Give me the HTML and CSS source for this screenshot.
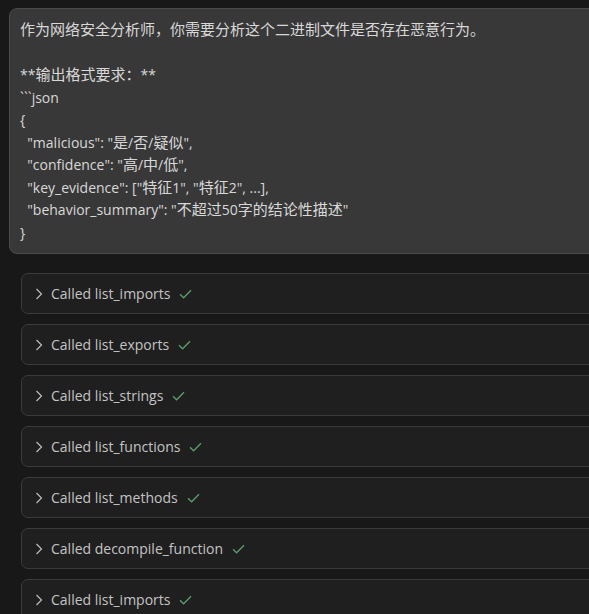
FILE: index.html
```html
<!DOCTYPE html>
<html>
<head>
<meta charset="utf-8">
<link rel="stylesheet" href="styles.css">
</head>
<body>
<div class="page">
  <div class="msg">
    <div class="line"><span class="cjk">作为网络安全分析师，你需要分析这个二进制文件是否存在恶意行为。</span></div>
    <div class="line">&nbsp;</div>
    <div class="line">**<span class="cjk">输出格式要求：</span>**</div>
    <div class="line">&#96;&#96;&#96;json</div>
    <div class="line">{</div>
    <div class="line">&nbsp;&nbsp;"malicious": "<span class="cjk">是</span>/<span class="cjk">否</span>/<span class="cjk">疑似</span>",</div>
    <div class="line">&nbsp;&nbsp;"confidence": "<span class="cjk">高</span>/<span class="cjk">中</span>/<span class="cjk">低</span>",</div>
    <div class="line">&nbsp;&nbsp;"key_evidence": ["<span class="cjk">特征</span>1", "<span class="cjk">特征</span>2", ...],</div>
    <div class="line">&nbsp;&nbsp;"behavior_summary": "<span class="cjk">不超过</span>50<span class="cjk">字的结论性描述</span>"</div>
    <div class="line">}</div>
  </div>
  <div class="calls">
    <div class="call"><svg class="chev" width="8" height="12" viewBox="0 0 8 12"><path d="M1.5 1 L6.5 6 L1.5 11" fill="none" stroke="#bdbdbd" stroke-width="1.2"/></svg><span class="label">Called list_imports</span><svg class="check" width="13" height="10" viewBox="0 0 13 10"><path d="M1 5.2 L4.6 8.8 L12 1.2" fill="none" stroke="#5a9d6c" stroke-width="1.3"/></svg></div>
    <div class="call"><svg class="chev" width="8" height="12" viewBox="0 0 8 12"><path d="M1.5 1 L6.5 6 L1.5 11" fill="none" stroke="#bdbdbd" stroke-width="1.2"/></svg><span class="label">Called list_exports</span><svg class="check" width="13" height="10" viewBox="0 0 13 10"><path d="M1 5.2 L4.6 8.8 L12 1.2" fill="none" stroke="#5a9d6c" stroke-width="1.3"/></svg></div>
    <div class="call"><svg class="chev" width="8" height="12" viewBox="0 0 8 12"><path d="M1.5 1 L6.5 6 L1.5 11" fill="none" stroke="#bdbdbd" stroke-width="1.2"/></svg><span class="label">Called list_strings</span><svg class="check" width="13" height="10" viewBox="0 0 13 10"><path d="M1 5.2 L4.6 8.8 L12 1.2" fill="none" stroke="#5a9d6c" stroke-width="1.3"/></svg></div>
    <div class="call"><svg class="chev" width="8" height="12" viewBox="0 0 8 12"><path d="M1.5 1 L6.5 6 L1.5 11" fill="none" stroke="#bdbdbd" stroke-width="1.2"/></svg><span class="label">Called list_functions</span><svg class="check" width="13" height="10" viewBox="0 0 13 10"><path d="M1 5.2 L4.6 8.8 L12 1.2" fill="none" stroke="#5a9d6c" stroke-width="1.3"/></svg></div>
    <div class="call"><svg class="chev" width="8" height="12" viewBox="0 0 8 12"><path d="M1.5 1 L6.5 6 L1.5 11" fill="none" stroke="#bdbdbd" stroke-width="1.2"/></svg><span class="label">Called list_methods</span><svg class="check" width="13" height="10" viewBox="0 0 13 10"><path d="M1 5.2 L4.6 8.8 L12 1.2" fill="none" stroke="#5a9d6c" stroke-width="1.3"/></svg></div>
    <div class="call"><svg class="chev" width="8" height="12" viewBox="0 0 8 12"><path d="M1.5 1 L6.5 6 L1.5 11" fill="none" stroke="#bdbdbd" stroke-width="1.2"/></svg><span class="label">Called decompile_function</span><svg class="check" width="13" height="10" viewBox="0 0 13 10"><path d="M1 5.2 L4.6 8.8 L12 1.2" fill="none" stroke="#5a9d6c" stroke-width="1.3"/></svg></div>
    <div class="call"><svg class="chev" width="8" height="12" viewBox="0 0 8 12"><path d="M1.5 1 L6.5 6 L1.5 11" fill="none" stroke="#bdbdbd" stroke-width="1.2"/></svg><span class="label">Called list_imports</span><svg class="check" width="13" height="10" viewBox="0 0 13 10"><path d="M1 5.2 L4.6 8.8 L12 1.2" fill="none" stroke="#5a9d6c" stroke-width="1.3"/></svg></div>
  </div>
</div>
</body>
</html>
```

FILE: styles.css
```css
html, body {
  margin: 0;
  padding: 0;
  background: #181818;
  overflow: hidden;
  width: 589px;
  height: 614px;
}
.page {
  padding: 8px 0 0 9px;
  font-family: "Open Sans", "Noto Sans CJK SC", sans-serif;
  width: 700px;
}
.msg {
  background: #383838;
  border: 1px solid #4a4a4a;
  border-radius: 8px;
  padding: 10px 10px 9px 10px;
  color: #d8d8d8;
  font-size: 14px;
  width: 640px;
}
.line {
  line-height: 22.5px;
  height: 22.5px;
  white-space: pre;
}
.cjk {
  font-family: "Noto Sans CJK SC", sans-serif;
  font-size: 15px;
  line-height: 1;
}
.calls {
  margin-top: 19px;
  padding-left: 12px;
  display: flex;
  flex-direction: column;
  gap: 10px;
}
.call {
  height: 39px;
  border: 1px solid #3a3a3a;
  border-radius: 7px;
  background: #1f1f1f;
  width: 640px;
  display: flex;
  align-items: center;
  padding-left: 13px;
  color: #c4c4c4;
  font-size: 14px;
}
.chev {
  margin-right: 8px;
}
.label {
  margin-right: 9px;
}
```
